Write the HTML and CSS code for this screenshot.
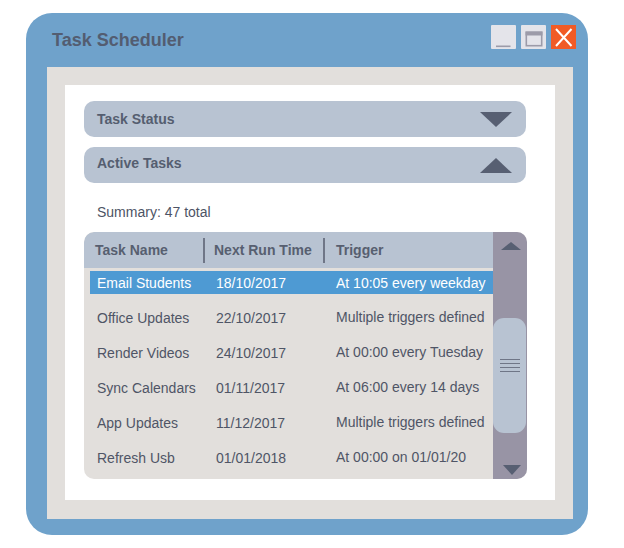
FILE: index.html
```html
<!DOCTYPE html>
<html>
<head>
<meta charset="utf-8">
<link rel="stylesheet" href="styles.css">
</head>
<body>
<div class="window">
  <div class="titlebar">
    <div class="title">Task Scheduler</div>
    <div class="controls">
      <div class="btn btn-light">
        <svg width="25" height="24" viewBox="0 0 25 24"><rect x="5" y="20.5" width="14.5" height="1.6" fill="#9c9ba9"/></svg>
      </div>
      <div class="btn btn-light">
        <svg width="25" height="24" viewBox="0 0 25 24"><rect x="5.3" y="7.3" width="15.4" height="13.4" fill="none" stroke="#9c9ba9" stroke-width="1.6"/><rect x="4.5" y="6.5" width="17" height="4" fill="#9c9ba9"/></svg>
      </div>
      <div class="btn btn-close">
        <svg width="25" height="24" viewBox="0 0 25 24"><path d="M5 4 L20.5 21 M20.5 4 L5 21" stroke="#ffffff" stroke-width="2" fill="none"/></svg>
      </div>
    </div>
  </div>
  <div class="frame">
    <div class="panel">
      <div class="bar">
        <span class="bar-label">Task Status</span>
        <svg class="tri" width="32" height="15" viewBox="0 0 32 15"><polygon points="0,0 32,0 16,15" fill="#575f72"/></svg>
      </div>
      <div class="bar">
        <span class="bar-label bar-label-up">Active Tasks</span>
        <svg class="tri" width="32" height="15" viewBox="0 0 32 15"><polygon points="0,15 32,15 16,0" fill="#575f72"/></svg>
      </div>
      <div class="summary">Summary: 47 total</div>
      <div class="table">
        <div class="main">
          <div class="thead">
            <div class="th">Task Name</div>
            <div class="th th-sep">Next Run Time</div>
            <div class="th th-sep th-last">Trigger</div>
          </div>
          <div class="tbody">
            <div class="row selected"><span>Email Students</span><span>18/10/2017</span><span class="trig">At 10:05 every weekday</span></div>
            <div class="row"><span>Office Updates</span><span>22/10/2017</span><span class="trig">Multiple triggers defined</span></div>
            <div class="row"><span>Render Videos</span><span>24/10/2017</span><span class="trig">At 00:00 every Tuesday</span></div>
            <div class="row"><span>Sync Calendars</span><span>01/11/2017</span><span class="trig">At 06:00 every 14 days</span></div>
            <div class="row"><span>App Updates</span><span>11/12/2017</span><span class="trig">Multiple triggers defined</span></div>
            <div class="row"><span>Refresh Usb</span><span>01/01/2018</span><span class="trig">At 00:00 on 01/01/20</span></div>
          </div>
        </div>
        <div class="scrollbar">
          <svg class="arrow-up" width="20" height="8" viewBox="0 0 20 8"><polygon points="0,8 20,8 10,0" fill="#575f72"/></svg>
          <div class="thumb">
            <div class="grip"></div>
            <div class="grip"></div>
            <div class="grip"></div>
            <div class="grip"></div>
          </div>
          <svg class="arrow-down" width="18" height="10" viewBox="0 0 18 10"><polygon points="0,0 18,0 9,10" fill="#575f72"/></svg>
        </div>
      </div>
    </div>
  </div>
</div>
</body>
</html>
```
FILE: styles.css
```css
* { box-sizing: border-box; }
html, body { margin: 0; padding: 0; background: #ffffff; }
body { font-family: "Liberation Sans", Arial, sans-serif; }

.window {
  margin: 13px 0 0 26px;
  width: 562px;
  height: 522px;
  background: #6fa2cb;
  border-radius: 26px;
  display: flex;
  flex-direction: column;
}

.titlebar {
  height: 54px;
  flex-shrink: 0;
  display: flex;
  justify-content: space-between;
  align-items: flex-start;
  padding: 0 12px 0 26px;
}
.title {
  margin-top: 16px;
  font-size: 18px;
  font-weight: bold;
  color: #535d71;
  line-height: 22px;
}
.controls {
  margin-top: 12px;
  display: flex;
  gap: 5px;
}
.btn {
  width: 25px;
  height: 24px;
}
.btn svg { display: block; }
.btn-light { background: #e4e4ea; border-radius: 1px; }
.btn-close { background: #f15b26; }

.frame {
  margin: 0 15px 16px 21px;
  flex: 1;
  background: #e2dfdc;
  padding: 18px 18px 19px 18px;
  display: flex;
}
.panel {
  flex: 1;
  background: #ffffff;
  padding: 16px 29px 0 19px;
  display: flex;
  flex-direction: column;
}

.bar {
  height: 36px;
  flex-shrink: 0;
  background: #b8c3d2;
  border-radius: 10px;
  display: flex;
  align-items: center;
  justify-content: space-between;
  padding: 0 14px 0 13px;
  margin-bottom: 10px;
}
.bar-label {
  font-size: 14px;
  font-weight: bold;
  color: #555e70;
}
.bar-label-up { padding-bottom: 5px; }
.tri { display: block; }

.summary {
  margin-top: 11px;
  padding-left: 13px;
  font-size: 14px;
  line-height: 16px;
  color: #4d5465;
}

.table {
  margin-top: 12px;
  height: 247px;
  flex-shrink: 0;
  display: flex;
  background: #e2dfdc;
  border-radius: 10px;
  overflow: hidden;
  margin-right: -1px;
}
.main { flex: 1; display: flex; flex-direction: column; }

.thead {
  height: 36px;
  flex-shrink: 0;
  background: #b8c3d2;
  border-top-left-radius: 10px;
  display: grid;
  grid-template-columns: 108px 120px 1fr;
  align-items: center;
  padding-left: 11px;
}
.th {
  font-size: 14px;
  font-weight: bold;
  color: #575f70;
  height: 25px;
  line-height: 25px;
}
.th-sep {
  border-left: 2px solid #6f7687;
  padding-left: 9px;
}
.th-last { padding-left: 11px; }

.tbody {
  flex-shrink: 0;
  padding: 3px 0 0 6px;
}
.row {
  height: 23px;
  margin-bottom: 12px;
  display: grid;
  grid-template-columns: 119px 120px 1fr;
  align-items: center;
  padding-left: 7px;
  font-size: 14px;
  color: #4f5566;
  white-space: nowrap;
}
.row:last-child { margin-bottom: 0; }
.row .trig { padding-bottom: 2px; }
.row.selected {
  background: #4e9ad3;
  color: #ffffff;
}
.row.selected .trig { padding-bottom: 0; }

.scrollbar {
  width: 34px;
  flex-shrink: 0;
  background: #9894a5;
  display: flex;
  flex-direction: column;
  align-items: center;
  padding-top: 10px;
}
.arrow-up { display: block; margin-left: 1px; }
.thumb {
  margin-top: 68px;
  align-self: flex-start;
  width: 33px;
  height: 115px;
  background: #b8c3d2;
  border-radius: 11px;
  display: flex;
  flex-direction: column;
  align-items: center;
  padding-top: 41px;
  gap: 2.7px;
}
.grip {
  width: 20px;
  height: 1.2px;
  background: #6f7687;
}
.arrow-down {
  display: block;
  margin-top: 32px;
  margin-left: 3px;
}
```
